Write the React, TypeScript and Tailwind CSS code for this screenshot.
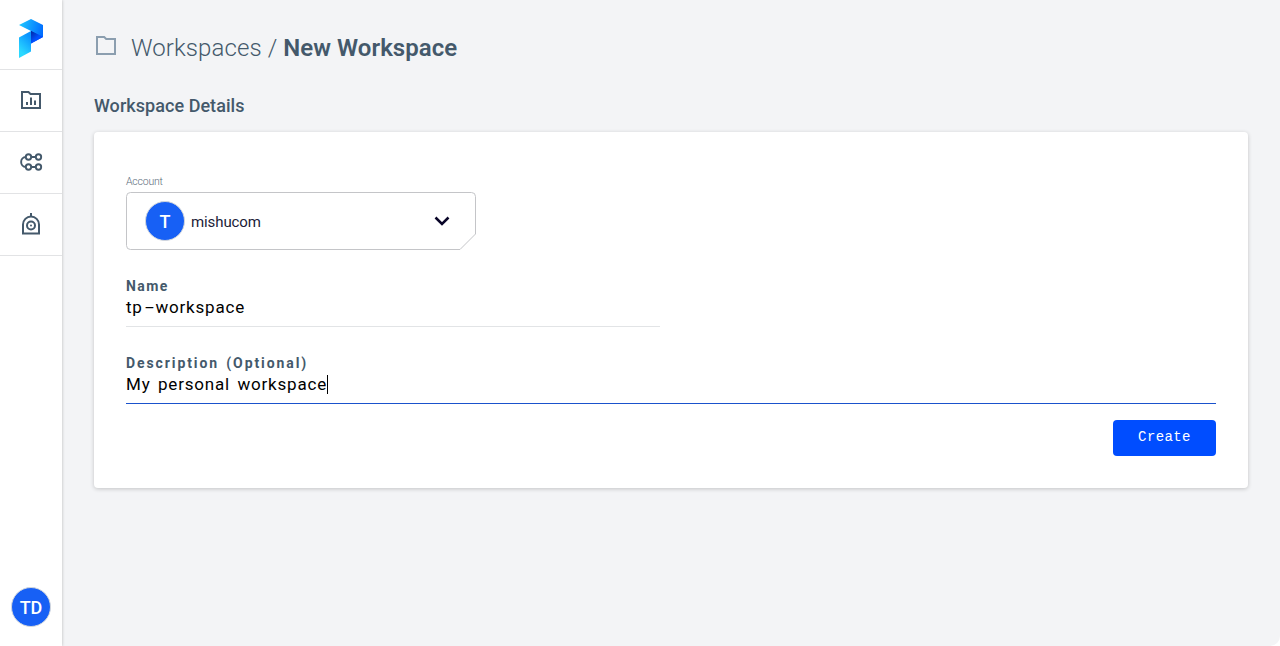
import React from 'react';

function Logo() {
  return (
    <svg width="26" height="40" viewBox="18 18 26 40" fill="none">
      <defs>
        <linearGradient id="top" x1="19" y1="25" x2="43" y2="31" gradientUnits="userSpaceOnUse">
          <stop stopColor="#20c8ff" />
          <stop offset="1" stopColor="#006cff" />
        </linearGradient>
        <linearGradient id="leg" x1="19" y1="50" x2="31" y2="38" gradientUnits="userSpaceOnUse">
          <stop stopColor="#2bd9ff" />
          <stop offset="1" stopColor="#0a94ff" />
        </linearGradient>
        <linearGradient id="fold" x1="31" y1="32" x2="39" y2="41" gradientUnits="userSpaceOnUse">
          <stop stopColor="#0029a8" />
          <stop offset="0.7" stopColor="#0050ff" />
        </linearGradient>
      </defs>
      <path d="M31 31v12.5l12-6.500V31Z" fill="url(#fold)" />
      <path d="M19 25l12-6 12 6v12L31 31Z" fill="url(#top)" />
      <path d="M31 31v12.5l12-6.500Z" fill="url(#fold)" />
      <path d="M19 37.5L31 31v20.5L19 58Z" fill="url(#leg)" />
    </svg>
  );
}

function ProjectsIcon() {
  return (
    <svg width="22" height="20" viewBox="0 0 22 20" fill="none" stroke="#44596b" strokeWidth="2">
      <path d="M2 2h6.500l2 2H20v14H2Z" />
      <path d="M7 12v3M11 7.500V15M15 10.500V15" />
    </svg>
  );
}

function ComponentsIcon() {
  return (
    <svg width="24" height="20" viewBox="0 0 24 20" fill="none" stroke="#44596b" strokeWidth="1.9">
      <circle cx="9.500" cy="5" r="2.700" />
      <circle cx="19.500" cy="5" r="2.700" />
      <circle cx="9.500" cy="15" r="2.700" />
      <circle cx="19.500" cy="15" r="2.700" />
      <path d="M12 5h5M12 15h5M7 5C.5 5 .5 15 7 15" />
    </svg>
  );
}

function DeployIcon() {
  return (
    <svg width="20" height="24" viewBox="0 0 20 24" fill="none" stroke="#44596b" strokeWidth="2">
      <path d="M2 21.500v-9a8 8 0 0 1 16 0v9ZM10 1v4" />
      <circle cx="10" cy="13.500" r="4" />
      <circle cx="10" cy="13.500" r="1" fill="#44596b" stroke="none" />
    </svg>
  );
}

function FolderIcon() {
  return (
    <svg width="20" height="19" viewBox="0 0 20 19" fill="none" stroke="#8b9eaf" strokeWidth="2">
      <path d="M1 1h7.200l2 2H19v15H1Z" />
    </svg>
  );
}

function Avatar({ text }: { text: string }) {
  return (
    <div className="flex size-[40px] items-center justify-center rounded-full border border-[#d3d7dc] bg-[#1760f5] text-[18px] font-medium text-white">
      {text}
    </div>
  );
}

export default function App() {
  return (
    <div className="flex h-[646px] w-full overflow-hidden bg-white font-['Roboto',sans-serif] text-[#44596b]">
      <aside className="z-10 flex w-[62px] shrink-0 flex-col bg-white shadow-[0_0_3px_rgba(0,0,0,0.25)]">
        <div className="flex h-[70px] items-center justify-center border-b border-[#e2e3e5] pt-[7px]"><Logo /></div>
        <nav className="flex flex-col">
          <a className="flex h-[62px] items-center justify-center border-b border-[#e2e3e5] pb-px"><ProjectsIcon /></a>
          <a className="flex h-[62px] items-center justify-center border-b border-[#e2e3e5] pb-[2px]"><ComponentsIcon /></a>
          <a className="flex h-[62px] items-center justify-center border-b border-[#e2e3e5] pb-[2px]"><DeployIcon /></a>
        </nav>
        <div className="mt-auto flex justify-center pb-[19px]"><Avatar text="TD" /></div>
      </aside>
      <main className="flex-1 rounded-br-[10px] bg-[#f3f4f6] pr-8 pl-8">
        <header className="flex h-[94px] items-center pl-[2px]">
          <div className="mr-4 -mt-[3px]"><FolderIcon /></div>
          <h1 className="-ml-px mt-[2px] text-[24px] font-light tracking-[0.1px] whitespace-pre">
            Workspaces / <span className="font-semibold tracking-[0.050px]">New Workspace</span>
          </h1>
        </header>
        <h2 className="h-[38px] text-[18px] leading-[24px] font-medium tracking-[0.050px]">Workspace Details</h2>
        <section className="flex h-[356px] flex-col rounded-[4px] bg-white px-8 shadow-[0_1px_4px_rgba(0,0,0,0.2)]">
          <div className="mt-[42px] h-[18px] text-[10.500px] leading-[15px] font-light tracking-[-0.200px] text-[#5b6b7a]">Account</div>
          <div className="relative flex h-[58px] w-[350px] shrink-0 items-center pr-[25px] pl-[19px]">
            <svg className="absolute inset-0" width="350" height="58" fill="none" stroke="#c4c5c8">
              <path d="M4.500.5h341a4 4 0 0 1 4 4V42L334 57.500H4.500a4 4 0 0 1-4-4v-49a4 4 0 0 1 4-4Z" />
            </svg>
            <Avatar text="T" />
            <span className="mt-[2px] ml-[6px] text-[15px] tracking-[-0.100px] text-[#211c38]">mishucom</span>
            <svg className="mr-[1px] ml-auto" width="16" height="10" fill="none" stroke="#090528" strokeWidth="2.500">
              <path d="M1.500 1.500L8 8l6.500-6.500" />
            </svg>
          </div>
          <label className="mt-[27px] h-[18px] text-[14px] leading-[18px] font-bold tracking-[1.4px]">Name</label>
          <div className="h-[32px] w-[534px] border-b border-[#e2e4e6] text-[17px] leading-[24px] tracking-[0.8px] text-black">
            <span>tp</span><span className="mr-[4px] ml-[4px] inline-block scale-x-[1.900] tracking-normal">-</span><span>workspace</span>
          </div>
          <label className="mt-[27px] h-[18px] text-[14px] leading-[18px] font-bold tracking-[1.9px] [word-spacing:2px]">Description (Optional)</label>
          <div className="flex h-[32px] border-b border-[#1a52cc] text-[17px] leading-[24px] tracking-[0.8px] text-black [word-spacing:2.500px]">
            <span>My personal workspace</span><i className="mt-[3px] h-[19px] w-px bg-black" />
          </div>
          <button className="mt-4 h-[36px] w-[103px] self-end rounded-[4px] bg-[#004dff] pb-[2px] font-['Liberation_Mono',monospace] text-[14px] tracking-[0.4px] text-white">Create</button>
        </section>
      </main>
    </div>
  );
}
